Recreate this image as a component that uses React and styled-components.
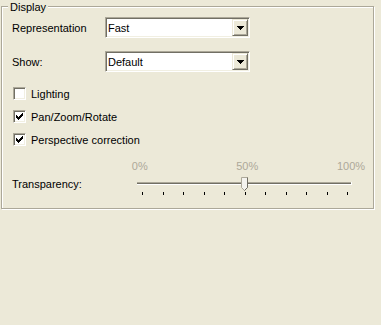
import React from 'react'
import styled, {createGlobalStyle} from 'styled-components'

const GlobalStyle = createGlobalStyle`
  body {
    margin: 0;
    background: #ECE9D8;
    font-family: "Liberation Sans", Arial, sans-serif;
    font-size: 11px;
    color: #000;
  }
`;

const Page = styled.div`
  width: 381px;
  height: 325px;
  box-sizing: border-box;
  padding: 6px 0 0 1px;
`;

const GroupBox = styled.div`
  position: relative;
  width: 373px;
  height: 203px;
  box-sizing: border-box;
  border: 1px solid #ACA899;
  box-shadow: inset 1px 1px 0 #fff, 1px 1px 0 #fff;
  padding: 10px 10px 0 10px;
`;

const Legend = styled.span`
  position: absolute;
  top: -6px;
  left: 6px;
  padding: 0 2px;
  line-height: 13px;
  background: #ECE9D8;
`;

const FieldRow = styled.div`
  display: flex;
  align-items: center;
  height: 21px;
  & + & {
    margin-top: 13px;
  }
`;

const FieldLabel = styled.div`
  width: ${p => p.width || 93}px;
  flex-shrink: 0;
`;

const Combo = styled.div`
  display: flex;
  align-items: center;
  width: 145px;
  height: 21px;
  box-sizing: border-box;
  background: #fff;
  border: 1px solid;
  border-color: #ACA899 #fff #fff #ACA899;
  box-shadow: inset 1px 1px 0 #716F64, inset -1px -1px 0 #F1EFE2;
  padding: 1px;
`;

const ComboText = styled.div`
  flex: 1;
  padding-left: 1px;
`;

const ComboButton = styled.div`
  display: flex;
  align-items: center;
  justify-content: center;
  width: 16px;
  height: 17px;
  box-sizing: border-box;
  background: #ECE9D8;
  border: 1px solid;
  border-color: #ECE9D8 #716F64 #716F64 #ECE9D8;
  box-shadow: inset 1px 1px 0 #fff, inset -1px -1px 0 #ACA899;
`;

const CheckRow = styled.div`
  display: flex;
  align-items: center;
  height: 13px;
  margin-top: ${p => p.gap}px;
  padding-left: 1px;
`;

const CheckBox = styled.div`
  width: 13px;
  height: 13px;
  box-sizing: border-box;
  background: #fff;
  border: 1px solid;
  border-color: #ACA899 #fff #fff #ACA899;
  box-shadow: inset 1px 1px 0 #716F64, inset -1px -1px 0 #F1EFE2;
  display: flex;
  align-items: center;
  justify-content: center;
`;

const CheckLabel = styled.span`
  margin-left: 5px;
`;

const ScaleRow = styled.div`
  display: flex;
  margin-top: 15px;
  padding-left: 115px;
  height: 11px;
  line-height: 11px;
  color: #ACA899;
`;

const ScaleText = styled.span`
  width: 26px;
  text-align: center;
  margin-left: ${p => p.offset || 0}px;
`;

const TrackRow = styled.div`
  display: flex;
  align-items: center;
`;

const DownArrow = () => (
  <svg width="7" height="4" viewBox="0 0 7 4">
    <path d="M0 0h7v1h-1v1h-1v1h-1v1h-1v-1h-1v-1h-1v-1h-1z" fill="#000" />
  </svg>
);

const CheckMark = () => (
  <svg width="7" height="7" viewBox="0 0 7 7">
    <path
      d="M0 2h1v1h1v1h1v-1h1v-1h1v-1h1v-1h1v3h-1v1h-1v1h-1v1h-1v1h-1v-1h-1v-1h-1v-1h-1z"
      fill="#000"
    />
  </svg>
);

function Select({value}) {
  return (
    <Combo>
      <ComboText>{value}</ComboText>
      <ComboButton><DownArrow /></ComboButton>
    </Combo>
  )
}

function Check({label, checked, gap}) {
  return (
    <CheckRow gap={gap}>
      <CheckBox>{checked && <CheckMark />}</CheckBox>
      <CheckLabel>{label}</CheckLabel>
    </CheckRow>
  )
}

const ticks = Array.from({length: 11}, (_, i) => 12 + Math.round(i * 20.5))

function TrackBar() {
  // drawn from x=130 on the page
  return (
    <svg width="232" height="23" viewBox="0 0 232 23">
      <rect x="7" y="10" width="214" height="1" fill="#ACA899" />
      <rect x="7" y="11" width="214" height="1" fill="#716F64" />
      <rect x="7" y="12" width="214" height="1" fill="#fff" />
      <rect x="221" y="10" width="1" height="3" fill="#fff" />
      {ticks.map(x => (
        <rect key={x} x={x} y="20" width="1" height="3" fill="#000" />
      ))}
      <path d="M111.5 5.5h6v10l-3 3l-3-3z" fill="#F4F3EE" stroke="#ACA899" />
      <path d="M117.5 5.5v10l-3 3" fill="none" stroke="#716F64" />
    </svg>
  )
}

export default function App() {
  return (
    <>
      <GlobalStyle />
      <Page>
        <GroupBox>
          <Legend>Display</Legend>
          <FieldRow>
            <FieldLabel>Representation</FieldLabel>
            <Select value="Fast" />
          </FieldRow>
          <FieldRow>
            <FieldLabel>Show:</FieldLabel>
            <Select value="Default" />
          </FieldRow>
          <Check label="Lighting" gap={15} />
          <Check label="Pan/Zoom/Rotate" checked gap={10} />
          <Check label="Perspective correction" checked gap={10} />
          <ScaleRow>
            <ScaleText>0%</ScaleText>
            <ScaleText offset={82}>50%</ScaleText>
            <ScaleText offset={77}>100%</ScaleText>
          </ScaleRow>
          <TrackRow>
            <FieldLabel width={118}>Transparency:</FieldLabel>
            <TrackBar />
          </TrackRow>
        </GroupBox>
      </Page>
    </>
  )
}
